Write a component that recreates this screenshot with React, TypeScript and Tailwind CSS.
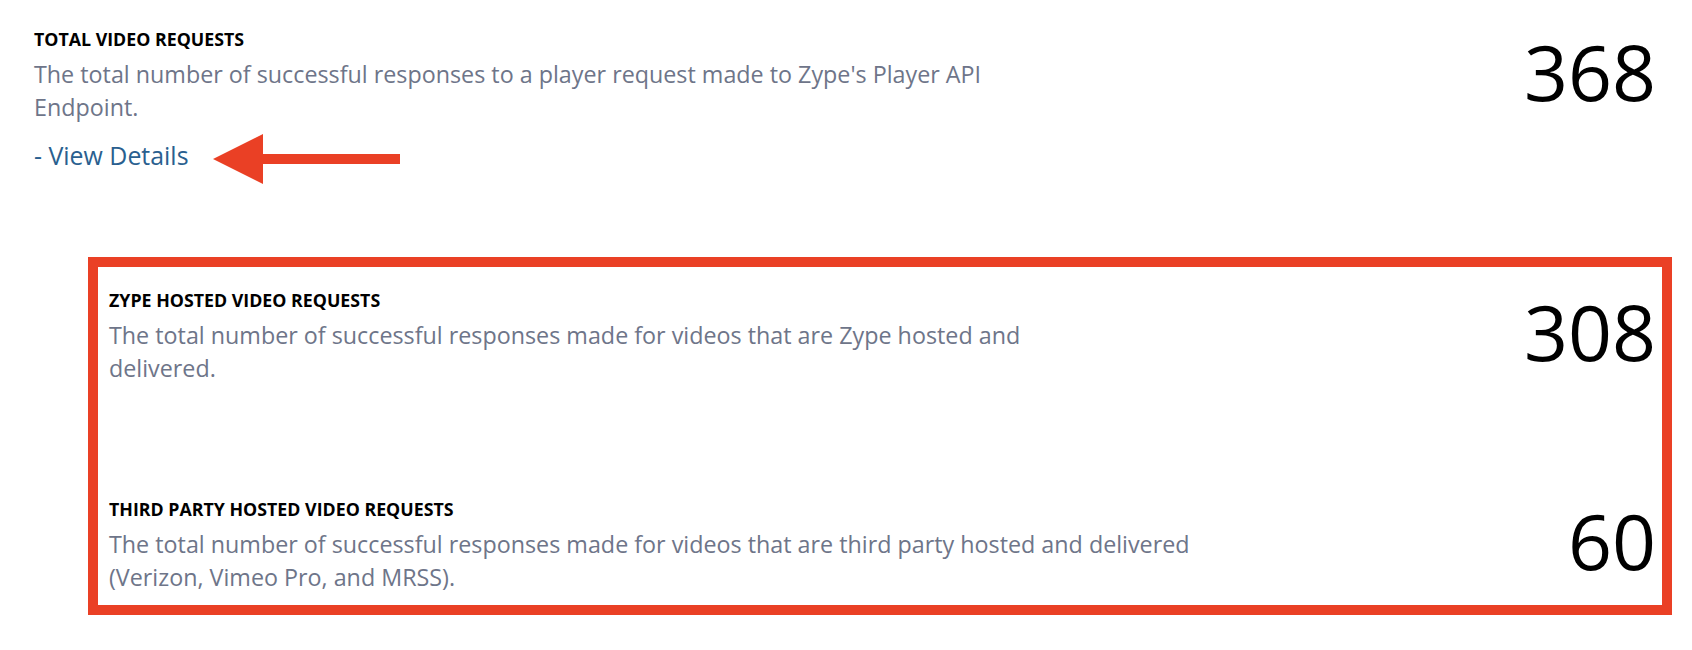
import React from "react";

// Metric row type
interface Metric {
    title: string;
    description: string;
    value: number;
    textWidth: string;
}

const ZYPE_RED = "#ea4025";

const totalMetric: Metric = {
    title: "TOTAL VIDEO REQUESTS",
    description:
        "The total number of successful responses to a player request made to Zype's Player API Endpoint.",
    value: 368,
    textWidth: "max-w-[1000px]",
};

const subMetrics: Metric[] = [
    {
        title: "ZYPE HOSTED VIDEO REQUESTS",
        description:
            "The total number of successful responses made for videos that are Zype hosted and delivered.",
        value: 308,
        textWidth: "max-w-[1000px]",
    },
    {
        title: "THIRD PARTY HOSTED VIDEO REQUESTS",
        description:
            "The total number of successful responses made for videos that are third party hosted and delivered (Verizon, Vimeo Pro, and MRSS).",
        value: 60,
        textWidth: "max-w-[1100px]",
    },
];

const MetricText = ({ item }: { item: Metric }): JSX.Element => (
    <div className={item.textWidth}>
        <div className="text-[17.8px] leading-[24px] font-bold text-black">
            {item.title}
        </div>
        <div className="mt-[7px] text-[23.3px] leading-[32.6px] text-[#6e7589]">
            {item.description}
        </div>
    </div>
);

const App = (): JSX.Element => {
    return (
        <div
            className="w-full h-[650px] bg-white overflow-hidden"
            style={{ fontFamily: '"Open Sans", "Noto Sans", sans-serif' }}
        >
            {/* total */}
            <div className="flex justify-between pl-[34px] pr-[36px] pt-[27px]">
                <div>
                    <MetricText item={totalMetric} />
                    <div className="flex items-start mt-[11px]">
                        <span className="mt-[5px] text-[24.9px] leading-[32.6px] text-[#2a5f8f]">
                            - View Details
                        </span>
                        <svg
                            width="187"
                            height="50"
                            viewBox="0 0 187 50"
                            className="ml-[24px]"
                        >
                            <polygon points="0,25 50,0 50,20 187,20 187,30 50,30 50,50" fill={ZYPE_RED} />
                        </svg>
                    </div>
                </div>
                <div className="mt-[5px] text-[77px] leading-[80px] text-black">
                    {totalMetric.value}
                </div>
            </div>

            {/* breakdown, highlighted */}
            <div
                className="ml-[88px] mr-[20px] mt-[73px] border-[10px] pl-[11px] pr-[6px] pt-[21px] pb-[11px]"
                style={{ borderColor: ZYPE_RED }}
            >
                {subMetrics.map((item, idx) => (
                    <div
                        key={idx}
                        className={`flex justify-between ${idx > 0 ? "mt-[113px]" : ""}`}
                    >
                        <MetricText item={item} />
                        <div className="mt-[4px] text-[77px] leading-[80px] text-black">
                            {item.value}
                        </div>
                    </div>
                ))}
            </div>
        </div>
    );
};

export default App;
